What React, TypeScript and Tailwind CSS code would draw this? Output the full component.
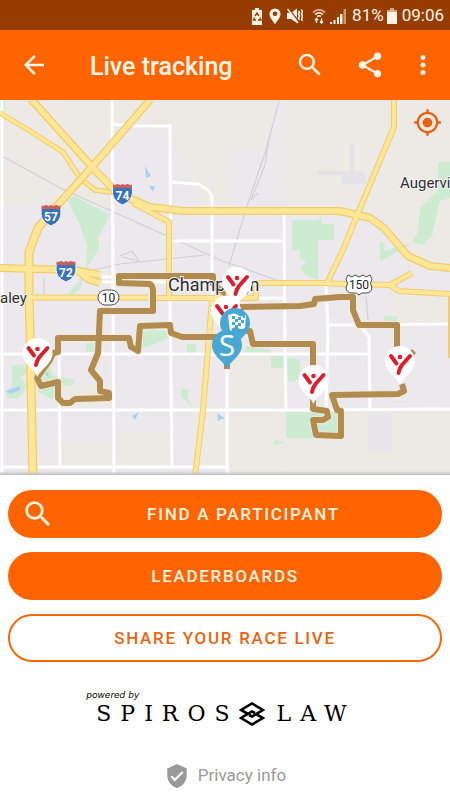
import type { ReactNode } from "react";
import {
  MdArrowBack,
  MdMoreVert,
  MdMyLocation,
  MdSearch,
  MdShare,
  MdVerifiedUser,
} from "react-icons/md";

const WHITE_ROADS = [
  "M2 100V475",
  "M112 100L114 475",
  "M113 124L134 126H170L171 290",
  "M170 298L172 466",
  "M170 182L198 184L208 190Q212 194 212 200V300",
  "M172 241H283",
  "M284 207L285 353L286 410",
  "M59 354L60 466",
  "M227 360V475",
  "M0 354H370",
  "M0 410H300L450 409",
  "M0 467H227",
  "M102 277H118",
  "M102 282H118",
  "M150 282H170",
  "M255 298H284",
  "M326 284L328 330L326 410",
  "M328 325H361L450 324",
  "M360 325L369 337L370 408",
];

const MINOR_YELLOW = [
  "M133 203L150 212L169 222V298",
  "M32 297.500H148",
  "M155 298H256V283H326",
  "M212 300L203 410L195 476",
  "M394 99V127L358 213L343 250L327 283",
  "M390 285L412 273",
  "M326 283.500L390 285L399 291L450 294",
];

const MAJOR_YELLOW = [
  "M31 99L93 168L117 193L150 207L183 211H340L370 218L384 228L408 256L430 266L450 268",
  "M0 268L74 270L100 275",
  "M78 271L88 279L100 283",
  "M150 100L98 160L56 207",
];

const ROUTES = [
  "M226 294L213 284V276H119V283L150 284Q153 286 153 291V311H100L98 353L91 370L100 381V391L109 393V398L75 399L70 403H63L58 398V382L41 386L37 378L50 360L53 353L58 352V338H129L131 347L138 351L140 326L170 325L171 333L182 337H218",
  "M240 307L300 306L314 304L315 299L340 297H353V310L359 325H397V358",
  "M244 331H250L253 344H313V409L327 411L328 417L323 420H313L316 435L341 436V411L337 410L332 395L398 394L404 391L402 384",
];

function Interstate({ x, y, n }: { x: number; y: number; n: string }) {
  return (
    <g transform={`translate(${x} ${y})`}>
      <path
        d="M-9.500 -7.500Q-5 -9.500 0 -8Q5 -9.500 9.500 -7.500Q11 0 8 5Q5 9 0 11Q-5 9 -8 5Q-11 0 -9.500 -7.500Z"
        fill="#3a74b8"
        stroke="#f4f4f8"
        strokeWidth="1"
      />
      <path
        d="M-9.500 -6V-9.500L-8 -9L-5 -10L-2 -9L0 -10L2 -9L5 -10L8 -9L9.500 -9.500V-6Z"
        fill="#c9605d"
      />
      <text
        y="6"
        textAnchor="middle"
        fill="#ffffff"
        className="font-['Roboto',sans-serif] text-[12px] font-bold"
      >
        {n}
      </text>
    </g>
  );
}

function Pin({
  x,
  y,
  fill = "#ffffff",
  children,
}: {
  x: number;
  y: number;
  fill?: string;
  children: ReactNode;
}) {
  return (
    <g transform={`translate(${x} ${y})`}>
      <path
        d="M0 24C-3 16 -15 11 -15 0A15 15 0 0 1 15 0C15 11 3 16 0 24Z"
        fill={fill}
      />
      {children}
    </g>
  );
}

function YMark() {
  return (
    <g stroke="#d9202c" strokeWidth="4" strokeLinecap="round" fill="none">
      <path d="M-9 -5L-3.500 2.500" />
      <path d="M10 -5L2 4Q-1 8 -1.500 12" />
      <circle cx="0" cy="-4" r="2.300" fill="#d9202c" stroke="none" />
    </g>
  );
}

function RaceMap() {
  return (
    <svg
      viewBox="0 100 450 375"
      role="img"
      aria-label="Race course map"
      className="block aspect-6/5 w-full font-['Roboto',sans-serif]"
    >
      <rect y="100" width="450" height="375" fill="#ebe9ec" />
      <g fill="#edeae6">
        <path d="M0 100H112V205H0Z" />
        <path d="M114 100H230V205H200L180 150L150 124H114Z" />
        <path d="M230 100H278L262 150H230Z" />
        <path d="M286 100H450V262H420L380 215H286Z" />
        <path d="M390 296H450V475H286V412H450V324H394Z" />
        <path d="M228 355H284V475H228Z" />
        <path d="M190 411H226V466H198Z" />
        <path d="M62 385H112V408H62ZM62 440H112V466H62ZM116 432H168V466H116Z" />
      </g>
      <path d="M317 171H350V143H354V171H363V175H366V184H342V175H317Z" fill="#e3e2e7" />
      <path d="M368 413H392V452H368Z" fill="#e8e6ea" />

      <g fill="#cdebd0">
        <path d="M67 199L74 196L110 215L97 240H85L80 225Z" />
        <path d="M85 240H99V248L92 260L86 268L87 245Z" />
        <path d="M75 286L84 275L80 288L72 296H66Z" />
        <path d="M0 101H5V112L0 114Z" />
        <path d="M292 220H317L322 217V224H334V240H318V280L306 276L300 268L306 262L300 258V250H292Z" />
        <path d="M438 162H450V198L440 201L432 235L424 244L412 243L418 232L420 208L432 196L438 190Z" />
        <path d="M380 241L385 244L384 251L412 243L402 250L380 261Z" />
        <path d="M150 330L166 331L168 338L150 346Z" />
        <path d="M187 344H196V353H187ZM86 343H94V352H86ZM143 331H150V347H143Z" />
        <path d="M246 346L272 350L270 353H244ZM271 356H284V368H271ZM287 357L300 360V380L288 382Z" />
        <path d="M181 389H188V399L193 408L187 402L181 397Z" />
        <path d="M286 412H338V434H320V438H286ZM384 316H397V321H384Z" />
        <path d="M12 366L24 364L27 372L20 378L28 386L18 399L8 398L5 392L12 387ZM38 370L47 360L53 375L74 380L73 386L55 384L53 400L38 392Z" />
        <path d="M276 439L284 443L273 445Z" />
      </g>
      <path
        d="M6 391L20 386L20 390L10 394ZM48 372L49 378L45 374ZM132 416L139 412L135 420ZM217 413L225 418L218 421ZM145 166L151 176L146 178ZM149 186H155L153 192Z"
        fill="#a9d1f2"
      />

      <g fill="none" stroke="#cfcfd6" strokeWidth="1.200">
        <path d="M2 156L60 188L165 235L220 260L285 283" />
        <path d="M279 101L266 150L247 206L229 266" />
        <path d="M269 138L265 165L251 200L258 193" />
        <path d="M80 273L120 264L205 255" />
        <path d="M120 256L132 251L139 261M122 257L138 261" />
        <path d="M44 298V278" />
        <path d="M366 297L368 320" />
      </g>

      <g fill="none" stroke="#ffffff" strokeWidth="3">
        {WHITE_ROADS.map((d) => (
          <path key={d} d={d} />
        ))}
      </g>

      <g fill="none" strokeLinejoin="round">
        <path d="M0 113L30 131L63 152L80 178L95 190L117 193" stroke="#f3cb6a" strokeWidth="5.500" />
        <path d="M0 113L30 131L63 152L80 178L95 190L117 193" stroke="#ffe796" strokeWidth="3.500" />
        <g stroke="#f3cb78" strokeWidth="6">
          {MINOR_YELLOW.map((d) => (
            <path key={d} d={d} />
          ))}
          <path d="M451 294V358" />
        </g>
        <g stroke="#f3cb6a" strokeWidth="8">
          {MAJOR_YELLOW.map((d) => (
            <path key={d} d={d} />
          ))}
          <path d="M56 207L38 228L29 252V290L33 476" strokeWidth="9" />
        </g>
        <g stroke="#ffe796" strokeWidth="4">
          {MINOR_YELLOW.map((d) => (
            <path key={d} d={d} />
          ))}
        </g>
        <g stroke="#ffe796" strokeWidth="5.500">
          {MAJOR_YELLOW.map((d) => (
            <path key={d} d={d} />
          ))}
          <path d="M56 207L38 228L29 252V290L33 476" strokeWidth="6.500" />
        </g>
      </g>

      <g fill="none" strokeLinejoin="round">
        <g stroke="#f6ead2" strokeWidth="7">
          {ROUTES.map((d) => (
            <path key={d} d={d} />
          ))}
        </g>
        <g stroke="#b18b4f" strokeWidth="6">
          {ROUTES.map((d) => (
            <path key={d} d={d} />
          ))}
          <path d="M227 358V369M410 351L414 355" />
        </g>
      </g>

      <Interstate x={51} y={215} n="57" />
      <Interstate x={122.5} y={194} n="74" />
      <Interstate x={66} y={271} n="72" />

      <rect x="98" y="290" width="21" height="15" rx="7.500" fill="#ffffff" stroke="#4a4a4a" />
      <text x="108.500" y="302" textAnchor="middle" fill="#222222" className="text-[12px]">
        10
      </text>
      <path
        d="M348 275L352 277L355 275L359 277L363 275L366 277L370 275L372 279Q369 283 372 288Q371 293 366 293Q361 292 359 295Q357 292 352 293Q347 293 346 288Q349 283 346 279Z"
        fill="#ffffff"
        stroke="#4a4a4a"
      />
      <text x="359" y="289" textAnchor="middle" fill="#222222" className="text-[12px]">
        150
      </text>

      <g fill="#303033" stroke="#f5f4f6" strokeWidth="2" paintOrder="stroke">
        <text x="0" y="303" className="text-[15px]">
          aley
        </text>
        <text x="400" y="188" className="text-[15px]">
          Augervi
        </text>
        <text x="168" y="291" className="text-[18px]">
          Champaign
        </text>
      </g>

      <Pin x={237} y={282}>
        <YMark />
      </Pin>
      <Pin x={226} y={311}>
        <YMark />
      </Pin>
      <Pin x={37.5} y={353}>
        <YMark />
      </Pin>
      <Pin x={313.5} y={380}>
        <YMark />
      </Pin>
      <Pin x={400} y={361}>
        <YMark />
      </Pin>
      <Pin x={235} y={323} fill="#49a7d3">
        <path d="M-6 -8L-4 9" stroke="#ffffff" strokeWidth="2" />
        <path d="M-6 -8Q-1 -11 3 -8T11 -8L10 5Q6 7 3 5T-4 6Z" fill="#ffffff" />
        <path
          d="M-3 -7H0V-4H-3ZM3 -6H6V-3H3ZM0 -4H3V-1H0ZM6 -3H9V0H6ZM-3 -1H0V2H-3ZM3 0H6V3H3ZM0 2H3V5H0ZM8 -8H10V-5H8Z"
          fill="#49a7d3"
        />
      </Pin>
      <Pin x={227} y={345} fill="#49a7d3">
        <text
          y="11"
          textAnchor="middle"
          fill="#ffffff"
          className="font-['Open_Sans',sans-serif] text-[30px]"
        >
          S
        </text>
      </Pin>
    </svg>
  );
}

function StatusBar() {
  return (
    <div className="flex h-[30px] items-center justify-end bg-[#953c00] pt-[2px] pr-[6px] text-[17px] text-[#fff3e6]">
      <svg viewBox="0 0 12 17" className="mr-[6px] h-[17px] w-3" fill="currentColor" aria-hidden="true">
        <path d="M4 0H8V2H11V17H1V2H4Z" />
        <path d="M4 8L6 5L8 8M9 9.500L10 12H7M5 12H2.500L3.500 9.500" fill="none" stroke="#953c00" strokeWidth="1.400" />
      </svg>
      <svg viewBox="0 0 12 17" className="mr-[6px] h-[17px] w-3" fill="currentColor" aria-hidden="true">
        <path
          fillRule="evenodd"
          d="M6 0.500A5.500 5.500 0 0 1 11.500 6C11.500 10 7 14 6 16.500C5 14 0.500 10 0.500 6A5.500 5.500 0 0 1 6 0.500ZM6 3.500A2.300 2.300 0 1 0 6 8.100A2.300 2.300 0 1 0 6 3.500Z"
        />
      </svg>
      <svg viewBox="0 0 16 16" className="mr-[9px] size-4" fill="none" stroke="currentColor" aria-hidden="true">
        <path d="M0 5H4L10 0.500V15L4 11H0Z" fill="currentColor" stroke="none" />
        <path d="M1.500 0.500L12 14" stroke="#953c00" strokeWidth="1.500" />
        <path d="M0.500 1L11 15" strokeWidth="1.500" />
        <path d="M11.500 3L12.500 4.500L11.500 6L12.500 8L11.500 10L12.500 12M14.500 1.500L15.500 4L14.500 6L15.500 8.500L14.500 11L15.500 13" strokeWidth="1.500" />
      </svg>
      <svg viewBox="0 0 14 16" className="mr-1 h-4 w-[14px]" fill="none" stroke="currentColor" aria-hidden="true">
        <path d="M1 4.500Q7 -1 13 4.500" strokeWidth="1.800" opacity=".6" />
        <path d="M3 6.500Q7 3 11 6.500M5 8.500Q7 7 9 8.500" strokeWidth="1.600" />
        <path d="M4.500 15V10.500M3 12L4.500 10.500L6 12M9.500 10.500V15M8 13.500L9.500 15L11 13.500" strokeWidth="1.400" />
      </svg>
      <svg viewBox="0 0 16 15" className="mr-[6px] h-[15px] w-4" fill="currentColor" aria-hidden="true">
        <path d="M0 13H2V15H0ZM3.500 11H5.500V15H3.500ZM7 8H9V15H7ZM10 5H12.500V15H10Z" />
        <path d="M13.500 0H16V15H13.500Z" opacity=".5" />
      </svg>
      <span>81%</span>
      <svg viewBox="0 0 10 16" className="mr-[5px] ml-[3px] h-4 w-[10px]" fill="currentColor" aria-hidden="true">
        <path d="M3 0H7V2H10V4H0V2H3Z" opacity=".6" />
        <path d="M0 4H10V16H0Z" />
      </svg>
      <span>09:06</span>
    </div>
  );
}

export default function App() {
  return (
    <div className="flex min-h-screen flex-col overflow-hidden bg-white font-['Roboto',sans-serif]">
      <StatusBar />
      <header className="flex h-[70px] items-center bg-[#fe6500] pr-3 pl-[19px] text-[#fff6ea]">
        <button type="button" aria-label="Back">
          <MdArrowBack size={30} />
        </button>
        <h1 className="ml-[41px] flex-1 pt-[3px] text-[25px] font-medium">Live tracking</h1>
        <button type="button" aria-label="Search">
          <MdSearch size={30} />
        </button>
        <button type="button" aria-label="Share" className="ml-[30px]">
          <MdShare size={30} />
        </button>
        <button type="button" aria-label="More options" className="ml-[23px]">
          <MdMoreVert size={30} />
        </button>
      </header>

      <section className="relative">
        <RaceMap />
        <button
          type="button"
          aria-label="Centre on my location"
          className="absolute top-2 right-2 text-[#e8610f]"
        >
          <MdMyLocation size={29} />
        </button>
        <div className="absolute inset-x-0 bottom-0 h-1 bg-linear-to-b from-transparent to-[#bdbdbd]" />
      </section>

      <main className="flex flex-1 flex-col px-2 pt-[15px]">
        <div className="flex flex-col gap-[14px] text-[17px] font-medium tracking-widest">
          <button
            type="button"
            className="flex h-12 items-center rounded-full bg-[#fe6500] pr-[10px] pl-[13px] text-[#fff3e0]"
          >
            <MdSearch size={34} />
            <span className="flex-1 pt-[2px]">FIND A PARTICIPANT</span>
          </button>
          <button type="button" className="h-12 rounded-full bg-[#fe6500] pt-[2px] text-[#fff3e0]">
            LEADERBOARDS
          </button>
          <button
            type="button"
            className="h-12 rounded-full border-2 border-[#f0690c] pt-[2px] text-[#e8650f]"
          >
            SHARE YOUR RACE LIVE
          </button>
        </div>

        <a href="#sponsor" className="mt-7 mr-2 flex flex-col self-center text-black">
          <span className="font-['DejaVu_Sans',sans-serif] text-[9px] leading-[10px] italic">
            powered by
          </span>
          <span className="ml-[10px] flex items-center font-['DejaVu_Serif',serif] text-[22px] leading-7 tracking-[9px]">
            SPIROS
            <svg viewBox="5 4 26 28" className="mr-3 h-7 w-[26px]" fill="none" stroke="currentColor" strokeWidth="2.600" aria-hidden="true">
              <path d="M14 18L7 14L18 7.500L29 14L18 20.500L15 19" />
              <path d="M22 18L29 22L18 28.500L7 22L18 15.500L21 17" />
            </svg>
            LAW
          </span>
        </a>

        <a
          href="#privacy"
          className="mt-[35px] flex items-center gap-2 self-center text-[17px] text-[#999999]"
        >
          <MdVerifiedUser size={26} />
          Privacy info
        </a>
      </main>
    </div>
  );
}
